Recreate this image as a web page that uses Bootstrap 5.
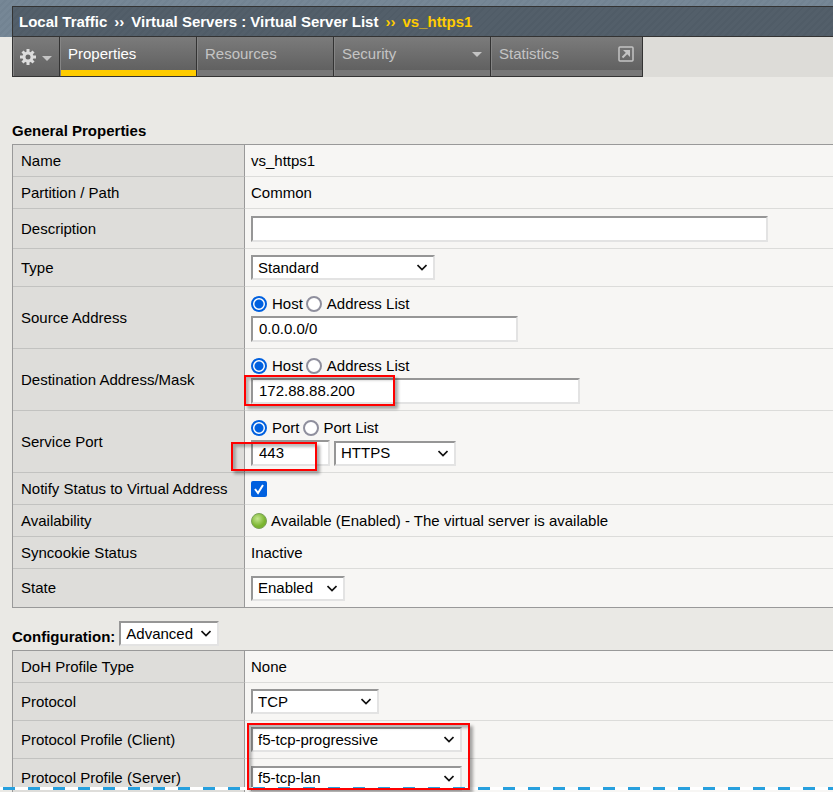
<!DOCTYPE html>
<html lang="en">
<head>
<meta charset="utf-8">
<meta name="viewport" content="width=device-width, initial-scale=1">
<title>Virtual Server Properties</title>
<link href="https://cdn.jsdelivr.net/npm/bootstrap@5.3.0/dist/css/bootstrap.min.css" rel="stylesheet">
<style>
body{font-family:"Liberation Sans",Arial,sans-serif;font-size:15px;line-height:18px;color:#000;background:#eae9e5}
.screen{height:100vh;min-height:0}
.top-band{background:repeating-linear-gradient(135deg,#768796 0 3px,#728392 3px 5px);padding:6px 0 0 12px}
.crumbs{background:repeating-linear-gradient(135deg,#535f6a 0 3px,#505c67 3px 5px);border:1px solid #333;border-right:0;height:31px;padding-left:6px;gap:7px;font-weight:700;color:#fff;white-space:nowrap}
.crumbs a{color:inherit;text-decoration:none}
.crumbs .current{color:#fc0}
.tab-row{margin-left:12px;height:40px;background:#dddcd8}
.tab-item{height:40px;border:1px solid #333;border-width:0 1px 1px 0;box-shadow:inset 1px 0 #858585;background:linear-gradient(#7b7b7b,#616161 33px,#777 33px);color:#c4c4c4;padding:0 8px 5px;text-decoration:none;font-size:15px}
.tab-item.on{color:#fff;background:linear-gradient(#7b7b7b,#616161 33px,#fc0 33px)}
.tab-gear{width:48px;border-left-width:1px;background:linear-gradient(#7b7b7b,#616161);padding:0 7px}
.tab-gear .caret{margin-top:4px}
.w-a{width:137px}.w-b{width:157px}.w-c{width:152px}
.section-title{font-size:15px;font-weight:700;line-height:18px}
.general-head{padding-top:45px}
.config-head{padding:13px 0 4px;gap:4px}
.props{border:1px solid #999;border-right:0;border-collapse:separate;border-spacing:0;width:100%}
.props th{width:232px;background:#dedddA;border-right:1px solid #999;border-bottom:1px solid #c2c2c0;padding:0 8px;font-weight:400}
.props td{background:#f7f6f4;border-bottom:1px solid #dcdcda;padding:0 6px}
.props tr{height:32px}
.props tr.tall{height:38px}
.props tr.roomy{height:40px}
.props tr.stack{height:62px}
.props tr.stack td{padding-bottom:2px}
.props tr:last-child>*{border-bottom:0}
.field,.pick{border:2px solid;border-color:#969696 #e3e3e3 #e3e3e3 #969696;border-radius:0;background:#fff;color:#000;height:26px;font-size:15px;line-height:18px}
.field{padding:0 6px;max-width:100%}
.pick{height:25px;padding:0 24px 0 5px;appearance:none;background:#fff url("data:image/svg+xml,%3Csvg xmlns='http://www.w3.org/2000/svg' width='10' height='7' viewBox='0 0 10 7'%3E%3Cpath d='M.5 1L5 5.500 9.500 1' fill='none' stroke='%23111' stroke-width='1.700'/%3E%3C/svg%3E") no-repeat right 6px center}
.s-type{width:184px}.s-port{width:122px}.s-state{width:94px}.s-conf{width:100px}.s-proto{width:128px}.s-prof{width:211px}
.f-desc{width:517px}.f-src{width:267px}.f-dst{width:329px}.f-port{width:79px}
.tick{appearance:none;width:16px;height:16px;margin:0;flex:none;background:#fff;border:2px solid #8f8f9d}
.tick[type=radio]{border-radius:50%}
.tick[type=radio]:checked{border-color:#0060df;background:radial-gradient(circle,#0060df 4px,#fff 5px)}
.tick[type=checkbox]{border:0;border-radius:2px;display:block;background:#0060df url("data:image/svg+xml,%3Csvg xmlns='http://www.w3.org/2000/svg' viewBox='0 0 16 16'%3E%3Cpath d='M4 8l3 4 5-8' fill='none' stroke='%23fff' stroke-width='2'/%3E%3C/svg%3E")}
.radios{height:24px}
.radios label{margin:0 3px 0 5px}
.marked{position:relative}
.frame{position:absolute;z-index:2;border:2px solid #f00;box-shadow:3px 3px 3px #0005,inset 3px 3px 3px #0004;pointer-events:none}
.frame-ip{left:-7px;top:-3px;width:151px;height:31px}
.frame-port{left:-20px;top:2px;width:86px;height:29px}
.frame-prof{left:-4px;top:-4px;width:223px;height:67px}
.cut{position:absolute;z-index:1;left:0;right:0;bottom:2px;height:3px;background:repeating-linear-gradient(90deg,#fff 0 3px,#27a0de 3px 15px,#fff 15px 25px)}
</style>
<script src="https://cdn.jsdelivr.net/npm/bootstrap@5.3.0/dist/js/bootstrap.bundle.min.js"></script>
</head>
<body>
<div class="screen position-relative overflow-hidden">
<header>
<div class="top-band"><nav class="crumbs d-flex align-items-center" aria-label="Breadcrumb"><a href="#">Local Traffic</a><span>››</span><a href="#">Virtual Servers : Virtual Server List</a><span class="current">››</span><a class="current" href="#">vs_https1</a></nav></div>
<nav class="tab-row d-flex" aria-label="Sections">
<button type="button" class="tab-item tab-gear d-flex align-items-center justify-content-between" aria-label="Settings">
<svg width="16" height="16" viewBox="0 0 16 16"><g stroke="#ddd" stroke-width="3"><path d="M8 0v16M0 8h16M2.500 2.500l11 11M13.500 2.500l-11 11"/></g><circle cx="8" cy="8" r="5.500" fill="#ddd"/><circle cx="8" cy="8" r="2.500" fill="#666"/></svg>
<svg class="caret" width="10" height="5" viewBox="0 0 10 5"><path d="M0 0h10L5 5z" fill="#c4c4c4"/></svg></button>
<a href="#" class="tab-item on w-a d-flex align-items-center">Properties</a>
<a href="#" class="tab-item w-a d-flex align-items-center">Resources</a>
<a href="#" class="tab-item w-b d-flex align-items-center justify-content-between">Security<svg width="10" height="5" viewBox="0 0 10 5"><path d="M0 0h10L5 5z" fill="#c4c4c4"/></svg></a>
<a href="#" class="tab-item w-c d-flex align-items-center justify-content-between">Statistics<svg width="16" height="16" viewBox="0 0 16 16" fill="none" stroke="#c4c4c4"><rect x="1" y="1" width="14" height="14" rx="1" stroke-width="1.500"/><path d="M4.500 11.500L9 7" stroke-width="2"/><path d="M5 4h7v7z" fill="#c4c4c4" stroke="none"/></svg></a>
</nav>
</header>
<main class="ps-2 ms-1">
<h1 class="section-title general-head mb-1">General Properties</h1>
<table class="props">
<tr><th scope="row">Name</th><td>vs_https1</td></tr>
<tr><th scope="row">Partition / Path</th><td>Common</td></tr>
<tr class="roomy"><th scope="row"><label for="desc">Description</label></th><td><input id="desc" class="field f-desc d-block" type="text"></td></tr>
<tr class="tall"><th scope="row"><label for="type">Type</label></th><td><select id="type" class="pick s-type d-block"><option>Standard</option></select></td></tr>
<tr class="stack"><th scope="row"><label for="src">Source Address</label></th><td><div class="radios d-flex align-items-center"><input class="tick" type="radio" name="s" id="s1" checked><label for="s1">Host</label><input class="tick" type="radio" name="s" id="s2"><label for="s2">Address List</label></div><input id="src" class="field f-src d-block" type="text" value="0.0.0.0/0"></td></tr>
<tr class="stack"><th scope="row"><label for="dst">Destination Address/Mask</label></th><td><div class="radios d-flex align-items-center"><input class="tick" type="radio" name="d" id="d1" checked><label for="d1">Host</label><input class="tick" type="radio" name="d" id="d2"><label for="d2">Address List</label></div><div class="marked"><input id="dst" class="field f-dst d-block" type="text" value="172.88.88.200"><span class="frame frame-ip"></span></div></td></tr>
<tr class="stack"><th scope="row"><label for="port">Service Port</label></th><td><div class="radios d-flex align-items-center"><input class="tick" type="radio" name="p" id="p1" checked><label for="p1">Port</label><input class="tick" type="radio" name="p" id="p2"><label for="p2">Port List</label></div><div class="marked d-flex align-items-end gap-1"><input id="port" class="field f-port" type="text" value="443"><select class="pick s-port" aria-label="Service"><option>HTTPS</option></select><span class="frame frame-port"></span></div></td></tr>
<tr><th scope="row"><label for="notify">Notify Status to Virtual Address</label></th><td><input id="notify" class="tick" type="checkbox" checked></td></tr>
<tr><th scope="row">Availability</th><td><div class="d-flex align-items-center gap-1"><svg width="16" height="16" viewBox="0 0 16 16"><defs><radialGradient id="g" cx=".4" cy=".35"><stop stop-color="#c4e68f"/><stop offset="1" stop-color="#7ab42f"/></radialGradient></defs><circle cx="8" cy="8" r="7.500" fill="url(#g)" stroke="#7ba05a"/></svg>Available (Enabled) - The virtual server is available</div></td></tr>
<tr><th scope="row">Syncookie Status</th><td>Inactive</td></tr>
<tr class="tall"><th scope="row"><label for="state">State</label></th><td><select id="state" class="pick s-state d-block"><option>Enabled</option></select></td></tr>
</table>
<div class="config-head d-flex align-items-end"><h2 class="section-title mb-0"><label for="conf">Configuration:</label></h2><select id="conf" class="pick s-conf"><option>Advanced</option></select></div>
<table class="props">
<tr><th scope="row">DoH Profile Type</th><td>None</td></tr>
<tr class="tall"><th scope="row"><label for="proto">Protocol</label></th><td><select id="proto" class="pick s-proto d-block"><option>TCP</option></select></td></tr>
<tr class="tall"><th scope="row"><label for="pc">Protocol Profile (Client)</label></th><td><div class="marked"><select id="pc" class="pick s-prof d-block"><option>f5-tcp-progressive</option></select><span class="frame frame-prof"></span></div></td></tr>
<tr class="tall"><th scope="row"><label for="psv">Protocol Profile (Server)</label></th><td><select id="psv" class="pick s-prof d-block"><option>f5-tcp-lan</option></select></td></tr>
</table>
</main>
<div class="cut"></div>
</div>
</body>
</html>
